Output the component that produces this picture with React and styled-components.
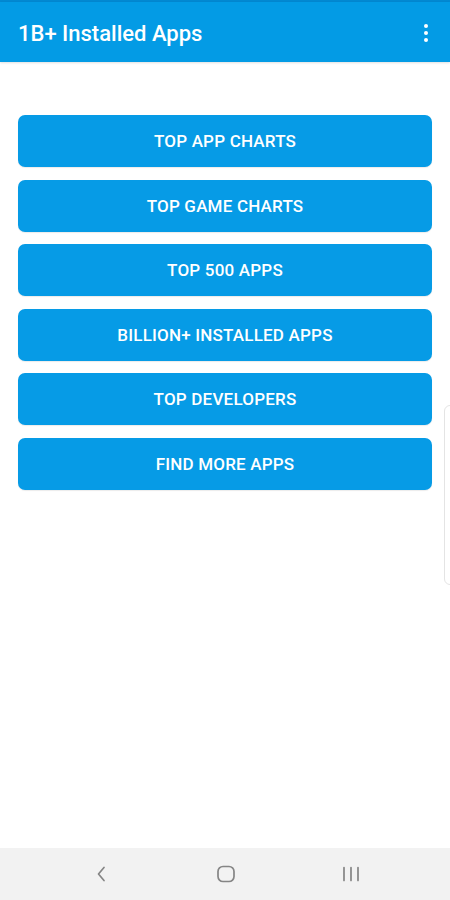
import styled, { createGlobalStyle } from "styled-components";
import { useState } from "react";

const GlobalStyle = createGlobalStyle`
    html, body {
        margin: 0;
        padding: 0;
        background: #fff;
    }
    body {
        font-family: Roboto, "Liberation Sans", sans-serif;
    }
    #root {
        height: 900px;
    }
`

const Screen = styled.div`
    width: 450px;
    height: 900px;
    display: flex;
    flex-direction: column;
    position: relative;
    overflow: hidden;
    background: #fff;
`

const StatusStrip = styled.div`
    height: 2px;
    background: #0288d1;
`

const AppBar = styled.header`
    height: 58px;
    background: #039be5;
    display: flex;
    align-items: center;
    justify-content: space-between;
    padding: 2px 12px 0 18px;
    box-shadow: 0 1px 2px rgba(0,0,0,.12);

    h1 {
        margin: 0;
        color: #fff;
        font-size: 22px;
        font-weight: 500;
        letter-spacing: 0;
    }
`

const MenuButton = styled.button`
    border: 0;
    background: none;
    width: 24px;
    height: 32px;
    display: flex;
    flex-direction: column;
    align-items: center;
    justify-content: center;
    gap: 3px;
    padding: 0;
    cursor: pointer;

    span {
        width: 4px;
        height: 4px;
        border-radius: 50%;
        background: #fff;
    }
`

const Content = styled.main`
    flex: 1;
    display: flex;
    flex-direction: column;
    gap: 12.6px;
    padding: 53px 18px 0;
`

const MenuItem = styled.button`
    height: 52px;
    border: 0;
    border-radius: 7px;
    background: ${(p) => (p.$active ? "#0288d1" : "#069be6")};
    color: #fff;
    font-family: Roboto, "Liberation Sans", sans-serif;
    font-size: 17px;
    font-weight: 500;
    letter-spacing: .2px;
    cursor: pointer;
    box-shadow: 0 1px 1px rgba(0,0,0,.08);
`

const EdgeHandle = styled.div`
    position: absolute;
    right: -8px;
    top: 405px;
    width: 12px;
    height: 178px;
    border: 1px solid #e4e4e4;
    border-radius: 6px;
    background: #fff;
`

const NavBar = styled.nav`
    height: 52px;
    background: #f2f2f2;
    display: flex;
    align-items: center;
    justify-content: center;
    gap: 101px;
    padding-left: 2px;
`

const NavIcon = styled.svg`
    width: 24px;
    height: 24px;
    stroke: #858585;
    fill: none;
    stroke-width: 1.7;
`

const items = [
    "TOP APP CHARTS",
    "TOP GAME CHARTS",
    "TOP 500 APPS",
    "BILLION+ INSTALLED APPS",
    "TOP DEVELOPERS",
    "FIND MORE APPS",
]

export default function App() {
    const [active, setActive] = useState(null)

    return (
        <Screen>
            <GlobalStyle />
            <StatusStrip />
            <AppBar>
                <h1>1B+ Installed Apps</h1>
                <MenuButton aria-label="More options">
                    <span /><span /><span />
                </MenuButton>
            </AppBar>
            <Content>
                {items.map((label) => (
                    <MenuItem key={label} $active={active === label} onClick={() => setActive(label)}>
                        {label}
                    </MenuItem>
                ))}
            </Content>
            <EdgeHandle />
            <NavBar>
                <NavIcon viewBox="0 0 24 24">
                    <path d="M15 5.5l-5.5 6.5 5.5 6.5" strokeLinecap="round" strokeLinejoin="round" />
                </NavIcon>
                <NavIcon viewBox="0 0 24 24">
                    <rect x="4" y="4.5" width="16" height="15" rx="5" />
                </NavIcon>
                <NavIcon viewBox="0 0 24 24">
                    <path d="M5 5.5v13M12 5.5v13M19 5.5v13" strokeLinecap="round" />
                </NavIcon>
            </NavBar>
        </Screen>
    )
}
